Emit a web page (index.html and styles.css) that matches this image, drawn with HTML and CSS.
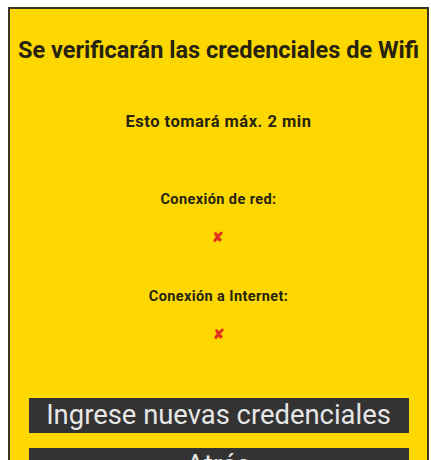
FILE: index.html
```html
<!DOCTYPE html>
<html lang="es">
<head>
<meta charset="utf-8">
<link rel="stylesheet" href="styles.css">
</head>
<body>
<div class="panel">
  <h1 class="title">Se verificarán las credenciales de Wifi</h1>
  <p class="note">Esto tomará máx. 2 min</p>
  <div class="check">
    <p class="label">Conexión de red:</p>
    <span class="mark">✘</span>
  </div>
  <div class="check">
    <p class="label">Conexión a Internet:</p>
    <span class="mark">✘</span>
  </div>
  <div class="actions">
    <button class="btn">Ingrese nuevas credenciales</button>
    <button class="btn">Atrás</button>
  </div>
</div>
</body>
</html>
```
FILE: styles.css
```css
html, body {
  margin: 0;
  padding: 0;
  background: #fff;
  overflow: hidden;
  height: 460px;
}
body {
  padding: 7px 2px 0 8px;
  font-family: Roboto, "Liberation Sans", sans-serif;
}
.panel {
  background: #fdd800;
  border: 2px solid #3a3520;
  border-bottom: none;
  height: 470px;
  box-sizing: border-box;
  display: flex;
  flex-direction: column;
  align-items: center;
  color: #262310;
}
.title {
  margin: 27px 0 0;
  font-size: 23.5px;
  line-height: 28px;
  font-weight: 700;
  letter-spacing: 0;
  white-space: nowrap;
}
.note {
  margin: 48px 0 0;
  font-size: 16.5px;
  line-height: 20px;
  font-weight: 700;
  letter-spacing: 0.5px;
}
.check {
  display: flex;
  flex-direction: column;
  align-items: center;
  margin-top: 59px;
}
.check + .check {
  margin-top: 44px;
}
.label {
  margin: 0;
  font-size: 14.5px;
  line-height: 18px;
  font-weight: 700;
  letter-spacing: 0.4px;
}
.mark {
  margin-top: 21px;
  color: #e0301e;
  font-size: 14px;
  line-height: 14px;
  font-weight: 700;
}
.actions {
  margin-top: 57px;
  display: flex;
  flex-direction: column;
  gap: 15px;
  width: 380px;
}
.btn {
  background: #333;
  color: #e6e6e6;
  border: none;
  font-family: Roboto, "Liberation Sans", sans-serif;
  font-size: 27.4px;
  height: 35px;
  padding: 0;
  line-height: 35px;
}
```
